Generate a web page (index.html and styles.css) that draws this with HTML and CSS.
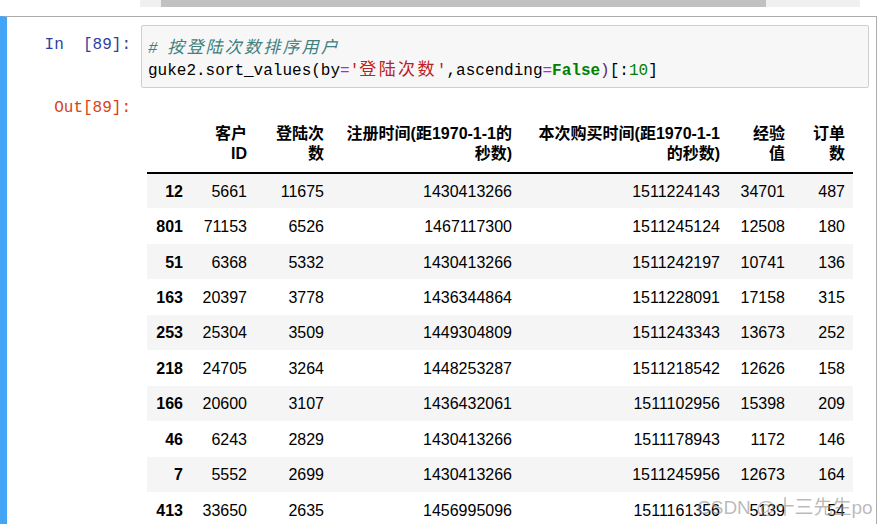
FILE: index.html
```html
<!DOCTYPE html>
<html>
<head>
<meta charset="utf-8">
<link rel="stylesheet" href="styles.css">
</head>
<body>
<div class="hscroll">
  <span class="arrow left"></span>
  <span class="thumb"></span>
  <span class="arrow right"></span>
</div>
<div class="cell">
  <div class="input">
    <div class="prompt in-prompt">In&nbsp;&nbsp;[89]:</div>
    <div class="code">
      <div class="line"><span class="cm-comment"># <span class="cjk cjk-c">按登陆次数排序用户</span></span></div>
      <div class="line">guke2.sort_values(by<span class="op">=</span><span class="str">'<span class="cjk cjk-s">登陆次数</span>'</span>,ascending<span class="op">=</span><span class="kw">False</span><span class="par">)</span>[:<span class="num">10</span>]</div>
    </div>
  </div>
  <div class="output">
    <div class="prompt out-prompt">Out[89]:</div>
    <div class="out-area">
      <table class="df">
        <thead>
          <tr>
            <th class="c1"></th>
            <th class="c2">客户<br>ID</th>
            <th class="c3">登陆次<br>数</th>
            <th class="c4">注册时间(距1970-1-1的<br>秒数)</th>
            <th class="c5">本次购买时间(距1970-1-1<br>的秒数)</th>
            <th class="c6">经验<br>值</th>
            <th class="c7">订单<br>数</th>
          </tr>
        </thead>
        <tbody>
          <tr><th>12</th><td>5661</td><td>11675</td><td>1430413266</td><td>1511224143</td><td>34701</td><td>487</td></tr>
          <tr><th>801</th><td>71153</td><td>6526</td><td>1467117300</td><td>1511245124</td><td>12508</td><td>180</td></tr>
          <tr><th>51</th><td>6368</td><td>5332</td><td>1430413266</td><td>1511242197</td><td>10741</td><td>136</td></tr>
          <tr><th>163</th><td>20397</td><td>3778</td><td>1436344864</td><td>1511228091</td><td>17158</td><td>315</td></tr>
          <tr><th>253</th><td>25304</td><td>3509</td><td>1449304809</td><td>1511243343</td><td>13673</td><td>252</td></tr>
          <tr><th>218</th><td>24705</td><td>3264</td><td>1448253287</td><td>1511218542</td><td>12626</td><td>158</td></tr>
          <tr><th>166</th><td>20600</td><td>3107</td><td>1436432061</td><td>1511102956</td><td>15398</td><td>209</td></tr>
          <tr><th>46</th><td>6243</td><td>2829</td><td>1430413266</td><td>1511178943</td><td>1172</td><td>146</td></tr>
          <tr><th>7</th><td>5552</td><td>2699</td><td>1430413266</td><td>1511245956</td><td>12673</td><td>164</td></tr>
          <tr><th>413</th><td>33650</td><td>2635</td><td>1456995096</td><td>1511161356</td><td>5139</td><td>54</td></tr>
        </tbody>
      </table>
    </div>
  </div>
</div>
<div class="watermark">CSDN @十三先生po</div>
</body>
</html>
```
FILE: styles.css
```css
html, body {
  margin: 0;
  padding: 0;
  overflow: hidden;
  background: #fff;
}
body {
  position: relative;
  width: 886px;
  height: 524px;
  font-family: "Liberation Sans", "Noto Sans CJK SC", sans-serif;
}
.hscroll {
  margin-left: 140px;
  width: 720px;
  height: 7px;
  background: #f0f0f0;
  display: flex;
  align-items: center;
}
.hscroll .arrow {
  width: 21px;
  height: 7px;
  flex: none;
}
.hscroll .thumb {
  width: 605px;
  height: 7px;
  background: #c1c1c1;
  flex: none;
}
.cell {
  margin-top: 9px;
  width: 877px;
  height: 520px;
  border-top: 1px solid #ababab;
  border-right: 1px solid #ababab;
  border-left: 7px solid #42a5f5;
  padding-top: 8px;
  box-sizing: border-box;
}
.input, .output {
  display: flex;
  align-items: flex-start;
}
.prompt {
  width: 134px;
  flex: none;
  box-sizing: border-box;
  padding-right: 10px;
  text-align: right;
  font-family: "Liberation Mono", "DejaVu Sans Mono", monospace;
  font-size: 16px;
  line-height: 22px;
  white-space: pre;
}
.in-prompt {
  color: #303f9f;
  padding-top: 9px;
}
.out-prompt {
  color: #d84315;
}
.code {
  width: 728px;
  height: 63px;
  box-sizing: border-box;
  border: 1px solid #cfcfcf;
  border-radius: 2px;
  background: #f7f7f7;
  padding: 9px 6px 8px 6px;
  font-family: "Liberation Mono", "Noto Sans CJK SC", monospace;
  font-size: 16px;
  line-height: 22px;
  color: #000;
}
.line {
  white-space: pre;
  height: 22px;
}
.cjk {
  font-family: "Noto Sans CJK SC", sans-serif;
  font-size: 17px;
}
.cjk-c { letter-spacing: 2.2px; }
.cjk-s { letter-spacing: 2.4px; }
.cm-comment { color: #408080; font-style: italic; }
.op { color: #aa22ff; }
.str { color: #ba2121; }
.kw { color: #008000; font-weight: bold; }
.num { color: #008000; }
.par { color: #5a2a6a; }
.output {
  margin-top: 9px;
}
.out-area {
  padding-left: 6px;
  padding-top: 23px;
}
.df {
  border-collapse: collapse;
  border-spacing: 0;
  table-layout: fixed;
  width: 706px;
  font-size: 16px;
  color: #000;
}
.df th, .df td {
  padding: 0 8px;
  text-align: right;
  white-space: nowrap;
  box-sizing: border-box;
}
.df thead th {
  font-weight: bold;
  line-height: 20px;
  padding-top: 4px;
  padding-bottom: 8px;
  vertical-align: bottom;
  border-bottom: 2px solid #000;
  font-family: "Liberation Sans", "Noto Sans CJK SC", sans-serif;
}
.df tbody th {
  font-weight: bold;
}
.df tbody td, .df tbody th {
  height: 35.44px;
  line-height: 20px;
  padding-top: 2px;
}
.df tbody tr:nth-child(odd) {
  background: #f5f5f5;
}
.c1 { width: 44px; }
.c2 { width: 64px; }
.c3 { width: 77px; }
.c4 { width: 188px; }
.c5 { width: 208px; }
.c6 { width: 65px; }
.c7 { width: 60px; }
.watermark {
  position: absolute;
  left: 697px;
  top: 497px;
  font-family: "Liberation Sans", "Noto Sans CJK SC", sans-serif;
  font-size: 19px;
  line-height: 22px;
  color: rgba(140, 140, 140, 0.6);
  white-space: nowrap;
}
```
